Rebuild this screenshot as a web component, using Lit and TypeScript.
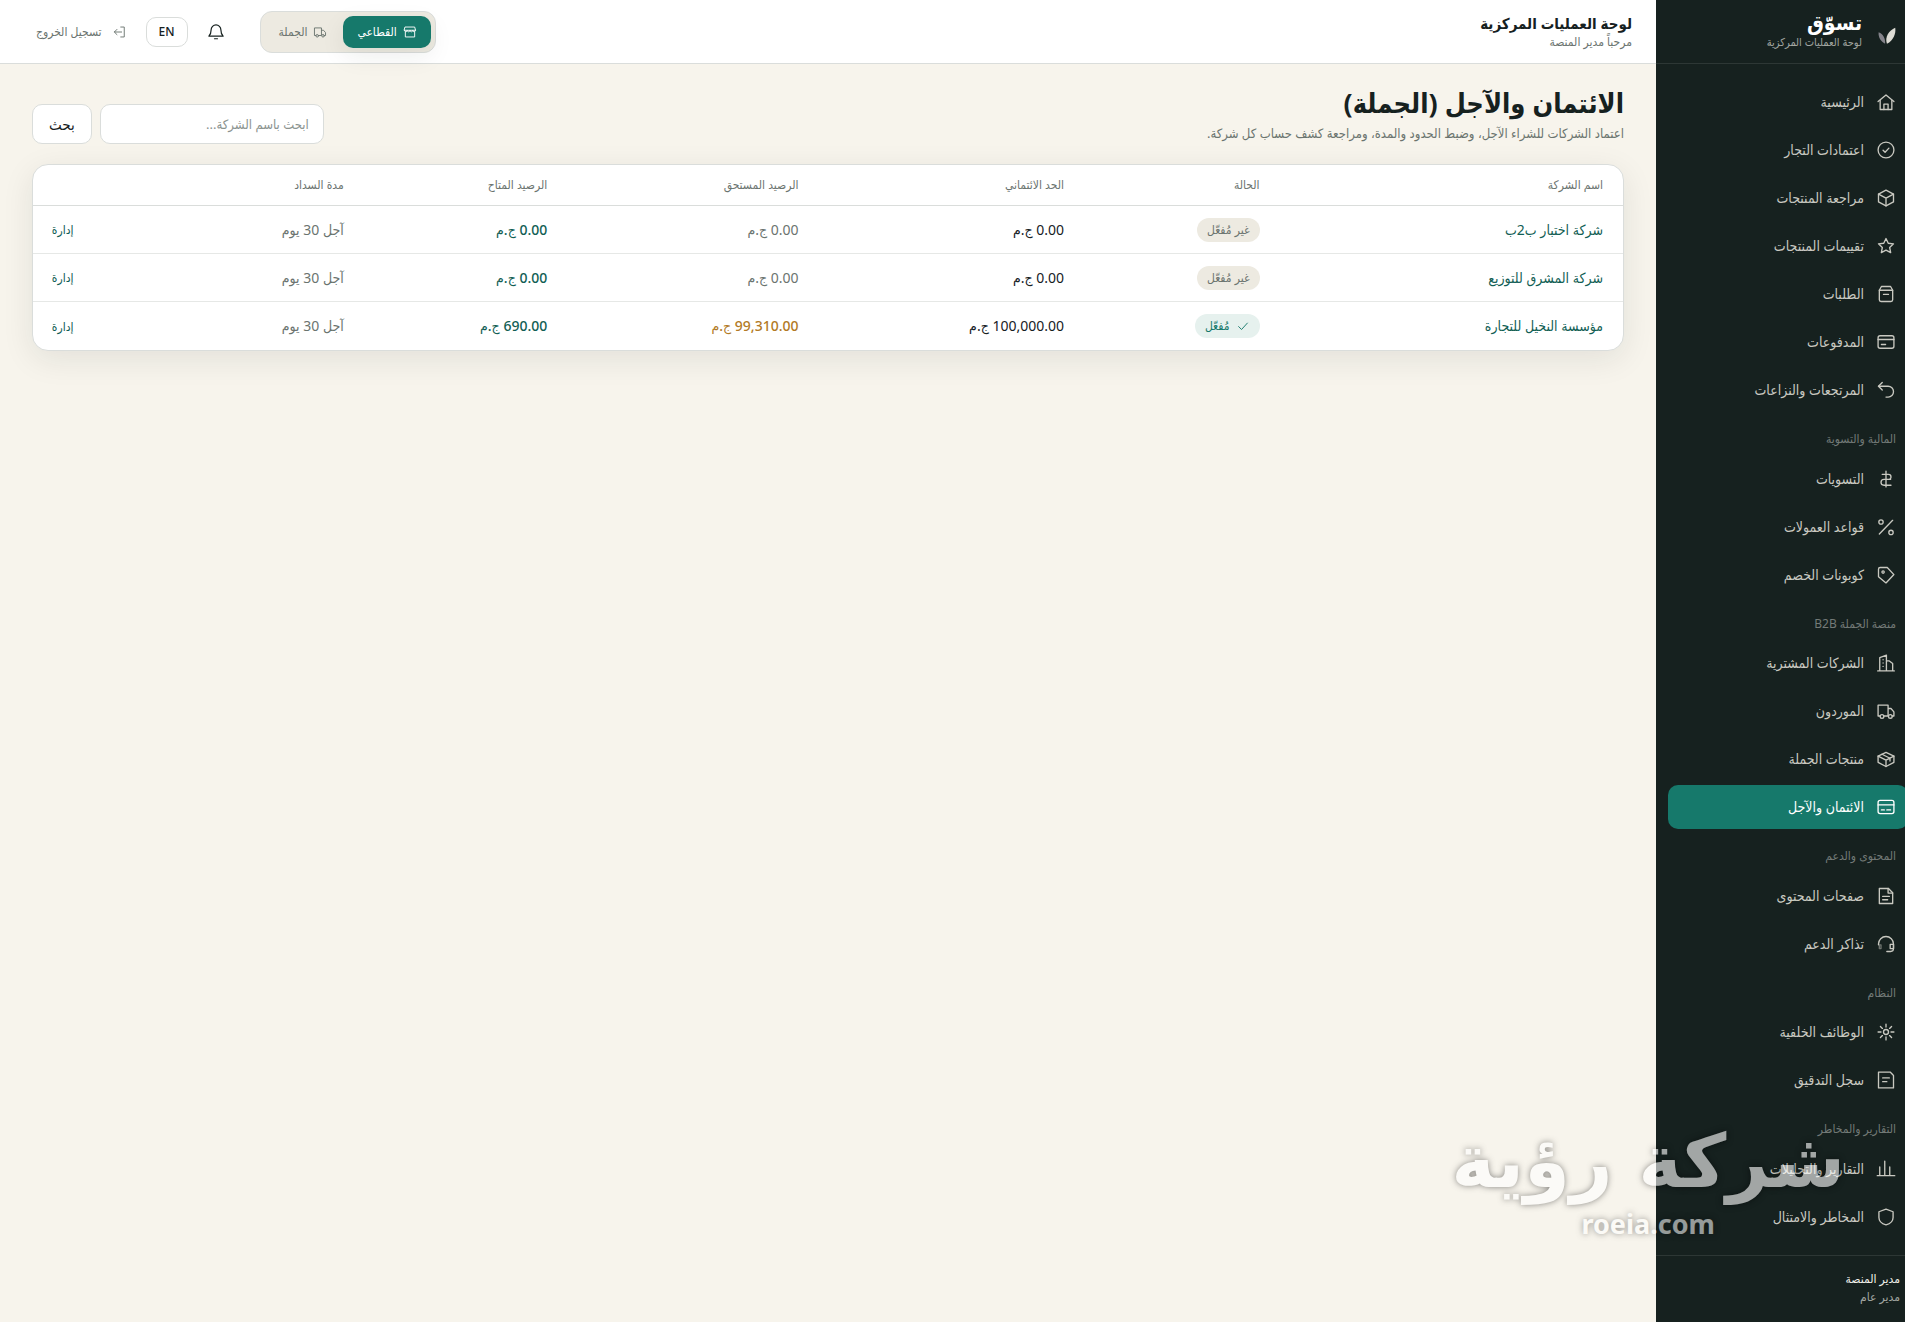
import { LitElement, html, css, svg, nothing } from 'lit';
import { customElement, property, state } from 'lit/decorators.js';
import { classMap } from 'lit/directives/class-map.js';

const ICONS: Record<string, unknown> = {
  home: svg`<path d="M2.500 11.500 12 3.500l9.500 8"/><path d="M5 10v11h14V10"/><path d="M9.500 21v-6.500h5V21"/>`,
  approve: svg`<circle cx="12" cy="12" r="9.500"/><path d="m8.500 12.300 2.400 2.400 4.600-4.900"/>`,
  box: svg`<path d="m12 2.500 9 4.800v9.400l-9 4.800-9-4.800V7.300z"/><path d="m3 7.300 9 4.900 9-4.900M12 12.200v9.300"/>`,
  star: svg`<path d="M12 3l2.700 5.700 6.300.700-4.600 4.400L17.600 20 12 17l-5.600 3 1.200-6.200L3 9.400l6.300-.700z"/>`,
  orders: svg`<path d="M6.500 3h11L20 7.500V19a2 2 0 0 1-2 2H6a2 2 0 0 1-2-2V7.500z"/><path d="M4 7.500h16M9 12.500h6"/>`,
  card: svg`<rect x="2.500" y="4.500" width="19" height="15" rx="2.500"/><path d="M2.500 9h19M6.500 15h5"/>`,
  back: svg`<path d="M7.500 3 3 7.500 7.500 12"/><path d="M3 7.500h11.500a6.500 6.500 0 0 1 0 13H12"/>`,
  money: svg`<path d="M12 2.500v19M7.500 6.500H15a3 3 0 0 1 0 6H9.500a3.500 3.500 0 0 0-3.500 3.500c0 2 1.500 3.500 3.500 3.500h8.500M15 12.500h2.500"/>`,
  percent: svg`<path d="M20 4 4 20.500"/><circle cx="6" cy="6" r="2.600"/><circle cx="18" cy="18.500" r="2.600"/>`,
  tag: svg`<path d="M5 3h8.500l8 8.500L12 21.500 3 14V5a2 2 0 0 1 2-2z"/><circle cx="8.500" cy="8.500" r="1.400"/>`,
  building: svg`<path d="M2 21.500h20M4.500 21.500V5.500L12.500 2.500v19M12.500 9.500h3.500l4 3v9"/><path d="M8.500 8v.100M8.500 12v.100M8.500 16v.100"/>`,
  truck: svg`<path d="M5 18H2.500V5h12v13H9.500M14.500 9h3.500l3.500 4v5h-2"/><circle cx="7.200" cy="18.500" r="2.200"/><circle cx="17.200" cy="18.500" r="2.200"/>`,
  package: svg`<path d="m12 4 9.500 4.500v7.500L12 21l-9.500-5V8.500z"/><path d="m2.500 8.500 9.500 4.800 9.500-4.800M12 13.300V21M7.200 6.300l9.600 4.800v3.400"/>`,
  credit: svg`<rect x="2.500" y="4" width="19" height="16" rx="2.500"/><path d="M2.500 9.500h19M6.500 15.500h3.500M13 15.500h4.500"/>`,
  page: svg`<path d="M4 3h11l5 5v13H4z"/><path d="M14.500 3v5.500H20M8 12.500h8M8 16.500h6"/>`,
  support: svg`<path d="M3 13v-1a9 9 0 0 1 18 0v5.500a3.500 3.500 0 0 1-3.500 3.500H13"/><path d="M17 12.500h4v5h-4z"/><path d="M4 13h2v4.500H4z" opacity="0.5"/>`,
  jobs: svg`<circle cx="12" cy="12" r="3"/><path d="M12 2.500V6M12 18v3.500M2.500 12H6M18 12h3.500M5.300 5.300l2.400 2.400M16.300 16.300l2.400 2.400M5.300 18.700l2.400-2.400M16.300 7.700l2.400-2.400"/>`,
  audit: svg`<path d="M3 2.500h14l4 4V21.500H3z"/><path d="M8 9.500h8M8 14h5"/>`,
  chart: svg`<path d="M1.500 20h21M4.500 20V9.500M10.500 20V2.500M16.500 20V9.500"/>`,
  shield: svg`<path d="m12 2.500 8.500 3.200v6.800c0 4.500-3.500 7.500-8.500 9-5-1.500-8.500-4.500-8.500-9V5.700z"/>`,
  store: svg`<path d="M4 3.500h16l1.500 5.500h-19z"/><path d="M4 11.500v9h16v-9M2.500 9c0 3.500 4.700 3.500 4.700 0 0 3.500 4.800 3.500 4.800 0 0 3.500 4.800 3.500 4.800 0 0 3.500 4.700 3.500 4.700 0"/>`,
  bell: svg`<path d="M12 2.500a6.500 6.500 0 0 0-6.500 6.500c0 5-1.500 7-3 8.500h19c-1.500-1.500-3-3.500-3-8.500A6.500 6.500 0 0 0 12 2.500z"/><path d="M10 21h4"/>`,
  logout: svg`<path d="M15 3.500h6v17h-6M16.500 12H4M8.500 7.500 4 12l4.500 4.500"/>`,
  check: svg`<path d="m4.500 13 5 5L19.500 7"/>`,
};

interface NavItem { icon: string; text: string; }
interface NavGroup { label?: string; items: NavItem[]; }

const NAV: NavGroup[] = [
  { items: [
    { icon: 'home', text: 'الرئيسية' },
    { icon: 'approve', text: 'اعتمادات التجار' },
    { icon: 'box', text: 'مراجعة المنتجات' },
    { icon: 'star', text: 'تقييمات المنتجات' },
    { icon: 'orders', text: 'الطلبات' },
    { icon: 'card', text: 'المدفوعات' },
    { icon: 'back', text: 'المرتجعات والنزاعات' },
  ] },
  { label: 'المالية والتسوية', items: [
    { icon: 'money', text: 'التسويات' },
    { icon: 'percent', text: 'قواعد العمولات' },
    { icon: 'tag', text: 'كوبونات الخصم' },
  ] },
  { label: 'منصة الجملة B2B', items: [
    { icon: 'building', text: 'الشركات المشترية' },
    { icon: 'truck', text: 'الموردون' },
    { icon: 'package', text: 'منتجات الجملة' },
    { icon: 'credit', text: 'الائتمان والآجل' },
  ] },
  { label: 'المحتوى والدعم', items: [
    { icon: 'page', text: 'صفحات المحتوى' },
    { icon: 'support', text: 'تذاكر الدعم' },
  ] },
  { label: 'النظام', items: [
    { icon: 'jobs', text: 'الوظائف الخلفية' },
    { icon: 'audit', text: 'سجل التدقيق' },
  ] },
  { label: 'التقارير والمخاطر', items: [
    { icon: 'chart', text: 'التقارير والتحليلات' },
    { icon: 'shield', text: 'المخاطر والامتثال' },
  ] },
];

interface Company { name: string; active: boolean; limit: string; due: string; available: string; terms: string; }

const COMPANIES: Company[] = [
  { name: 'شركة اختبار ب2ب', active: false, limit: '0.00', due: '0.00', available: '0.00', terms: 'آجل 30 يوم' },
  { name: 'شركة المشرق للتوزيع', active: false, limit: '0.00', due: '0.00', available: '0.00', terms: 'آجل 30 يوم' },
  { name: 'مؤسسة النخيل للتجارة', active: true, limit: '100,000.00', due: '99,310.00', available: '690.00', terms: 'آجل 30 يوم' },
];

@customElement('ui-icon')
class UiIcon extends LitElement {
  @property() name = '';
  static styles = css`
    :host { display: inline-flex; flex: none; width: 20px; height: 20px; }
    .glyph { width: 100%; height: 100%; fill: none; stroke: currentColor; stroke-width: 1.6; stroke-linecap: round; stroke-linejoin: round; }
  `;
  render() {
    return html`<svg class="glyph" viewBox="0 0 24 24" aria-hidden="true">${ICONS[this.name]}</svg>`;
  }
}

@customElement('side-nav')
class SideNav extends LitElement {
  @state() private current = 'credit';
  static styles = css`
    :host { display: block; background: #16211f; color: #c9c9c1; overflow: hidden; }
    * { box-sizing: border-box; }
    .inner { display: flex; flex-direction: column; min-height: 100vh; margin-right: -15px; }
    .brand { display: flex; align-items: center; gap: 12px; height: 64px; padding: 0 22px 4px; border-bottom: 1px solid #2d3735; }
    .mark { width: 24px; height: 24px; flex: none; margin-top: 12px; }
    .name { font-size: 21px; font-weight: 700; line-height: 24px; color: #fff; }
    .tag { font-size: 11px; line-height: 16px; color: #a2a6a1; }
    .menu { flex: 1; padding: 16px 12px; }
    .list { list-style: none; margin: 0; padding: 0; display: grid; gap: 4px; }
    .label { margin: 0; padding: 19px 12px 9px; font-size: 12px; font-weight: 400; line-height: 1.375; color: #737a77; }
    .item { display: flex; align-items: center; gap: 12px; height: 44px; padding: 0 12px; border-radius: 10px; color: inherit; font-size: 14px; line-height: 20px; text-decoration: none; }
    .item.on { background: #16796b; color: #fff; }
    .user { border-top: 1px solid #2d3735; padding: 14px 20px 16px; font-size: 12px; line-height: 18px; color: #a2a6a1; }
    .who { color: #f1f0ea; }
  `;
  render() {
    return html`<div class="inner">
      <div class="brand">
        <svg class="mark" viewBox="0 0 26 26" aria-hidden="true">
          <path d="M23 4c1 6-2 14-9 17.500C11.500 14 16 7 23 4z" fill="#dddcd5"/>
          <path d="M5 9c5 2 7.500 6.500 7 12.500C7.500 19 4.500 15 5 9z" fill="#84838a"/>
        </svg>
        <div><div class="name">تسوّق</div><div class="tag">لوحة العمليات المركزية</div></div>
      </div>
      <nav class="menu">
        ${NAV.map((g) => html`
          ${g.label ? html`<h2 class="label">${g.label}</h2>` : nothing}
          <ul class="list">${g.items.map((i) => html`<li>
            <a href="#${i.icon}" class=${classMap({ item: true, on: i.icon === this.current })} @click=${() => { this.current = i.icon; }}>
              <ui-icon name=${i.icon}></ui-icon><span>${i.text}</span></a></li>`)}</ul>`)}
      </nav>
      <div class="user"><div class="who">مدير المنصة</div><div>مدير عام</div></div>
    </div>`;
  }
}

@customElement('top-bar')
class TopBar extends LitElement {
  @state() private mode = 'retail';
  static styles = css`
    :host { display: flex; align-items: center; justify-content: space-between; height: 64px; padding: 0 24px; background: #fff; border-bottom: 1px solid #dadddb; box-sizing: border-box; color: #16211f; }
    * { box-sizing: border-box; }
    button { font: inherit; cursor: pointer; margin: 0; }
    .title { margin: 0; font-size: 15px; font-weight: 700; line-height: 20px; }
    .hello { margin: 0; font-size: 12px; line-height: 18px; color: #6b746f; }
    .tools { display: flex; align-items: center; }
    .switch { display: flex; gap: 2px; padding: 4px; border: 1px solid #dadddb; border-radius: 12px; background: #edeae1; margin-left: 24px; }
    .mode { display: flex; align-items: center; gap: 6px; height: 32px; padding: 0 14px; border: 0; border-radius: 10px; background: none; color: #6b746f; font-size: 12px; }
    .mode.on { background: #16796b; color: #fff; box-shadow: 0 8px 24px rgba(22, 33, 31, 0.08); }
    .mode ui-icon { width: 14px; height: 14px; }
    .round { display: grid; place-items: center; width: 40px; height: 40px; padding: 0; border: 0; background: none; color: #16211f; }
    .round ui-icon { width: 18px; height: 18px; }
    .lang { height: 30px; padding: 0 12px; margin: 0 8px; border: 1px solid #dadddb; border-radius: 10px; background: #fff; color: #16211f; font-size: 12px; font-weight: 500; }
    .exit { display: flex; align-items: center; gap: 10px; height: 32px; padding: 0 12px; border: 0; background: none; color: #6b746f; font-size: 12px; }
    .exit ui-icon { width: 14px; height: 14px; }
  `;
  private modeButton(id: string, icon: string, text: string) {
    return html`<button type="button" class=${classMap({ mode: true, on: this.mode === id })} aria-pressed=${this.mode === id} @click=${() => { this.mode = id; }}>
      <ui-icon name=${icon}></ui-icon>${text}</button>`;
  }
  render() {
    return html`
      <div><p class="title">لوحة العمليات المركزية</p><p class="hello">مرحباً مدير المنصة</p></div>
      <div class="tools">
        <div class="switch" role="group">${this.modeButton('retail', 'store', 'القطاعي')}${this.modeButton('wholesale', 'truck', 'الجملة')}</div>
        <button type="button" class="round" aria-label="الإشعارات"><ui-icon name="bell"></ui-icon></button>
        <button type="button" class="lang">EN</button>
        <button type="button" class="exit"><ui-icon name="logout"></ui-icon>تسجيل الخروج</button>
      </div>`;
  }
}

@customElement('credit-table')
class CreditTable extends LitElement {
  static styles = css`
    :host { display: block; background: #fff; border: 1px solid #dadddb; border-radius: 16px; overflow: hidden; box-shadow: 0 8px 32px rgba(22, 33, 31, 0.09); }
    table { width: 100%; border-collapse: collapse; table-layout: fixed; }
    th, td { padding: 0 20px; text-align: right; font-weight: 400; white-space: nowrap; line-height: 20px; }
    th { height: 40px; font-size: 12px; color: #6b746f; border-bottom: 1px solid #dadddb; }
    td { height: 47px; font-size: 14px; color: #16211f; border-bottom: 1px solid #e6e8e6; }
    tr:last-child td { height: 48px; border-bottom: 0; }
    .c-name { width: 21.6%; } .c-state { width: 12.3%; } .c-limit { width: 16.7%; }
    .c-due { width: 15.8%; } .c-free { width: 12.8%; } .c-terms { width: 17%; }
    .link { color: #115e54; text-decoration: none; font-size: 14px; }
    .link.small { font-size: 12px; }
    .soft, .term { color: #6b746f; }
    .warn { color: #b27a25; font-weight: 500; }
    .free { color: #115e54; font-weight: 500; }
    .pill { display: inline-flex; align-items: center; gap: 6px; height: 24px; padding: 0 10px; border-radius: 12px; background: #edeae1; color: #6b746f; font-size: 12px; vertical-align: middle; }
    .pill.on { background: #e6f1ee; color: #16796b; }
    .pill ui-icon { width: 14px; height: 14px; }
  `;
  render() {
    return html`<table>
      <colgroup><col class="c-name"><col class="c-state"><col class="c-limit"><col class="c-due"><col class="c-free"><col class="c-terms"><col></colgroup>
      <thead><tr><th>اسم الشركة</th><th>الحالة</th><th>الحد الائتماني</th><th>الرصيد المستحق</th><th>الرصيد المتاح</th><th>مدة السداد</th><th></th></tr></thead>
      <tbody>${COMPANIES.map((c) => html`<tr>
        <td><a class="link" href="#company">${c.name}</a></td>
        <td>${c.active
          ? html`<span class="pill on"><ui-icon name="check"></ui-icon>مُفعّل</span>`
          : html`<span class="pill">غير مُفعّل</span>`}</td>
        <td>${c.limit} ج.م</td>
        <td class=${c.active ? 'warn' : 'soft'}>${c.due} ج.م</td>
        <td class="free">${c.available} ج.م</td>
        <td class="term">${c.terms}</td>
        <td><a class="link small" href="#manage">إدارة</a></td>
      </tr>`)}</tbody>
    </table>`;
  }
}

@customElement('app-root')
class AppRoot extends LitElement {
  static styles = css`
    :host { display: block; position: relative; font-family: "Noto Sans", "DejaVu Sans Condensed", "DejaVu Sans", sans-serif; background: #f7f4ec; color: #16211f; direction: rtl; overflow: hidden; }
    * { box-sizing: border-box; }
    .shell { display: grid; grid-template-columns: 249px minmax(0, 1fr); min-height: 100vh; }
    .content { padding: 20px 32px 32px; }
    .head { display: flex; align-items: flex-end; justify-content: space-between; margin-bottom: 20px; }
    .title { margin: 0; font-size: 27px; font-weight: 700; line-height: 38px; }
    .lead { margin: 0; font-size: 13px; line-height: 22px; color: #6b746f; }
    .search { display: flex; gap: 8px; }
    .field { width: 224px; height: 40px; padding: 0 14px; border: 1px solid #dadddb; border-radius: 10px; background: #fff; font: inherit; font-size: 13px; color: #16211f; }
    .field::placeholder { color: #8b938f; opacity: 1; }
    .go { height: 40px; padding: 0 16px; border: 1px solid #dadddb; border-radius: 10px; background: #fff; font: inherit; font-size: 15px; color: #16211f; cursor: pointer; }
    .stamp { position: absolute; right: 60px; bottom: 81px; text-align: center; font-weight: 700; pointer-events: none; color: #fff; text-shadow: 0 0 6px rgba(0, 0, 0, 0.75); }
    .stamp-name { font-family: "DejaVu Sans", sans-serif; font-size: 74px; line-height: 92px; opacity: 0.6; }
    .stamp-site { font-size: 27px; line-height: 34px; opacity: 0.55; }
  `;
  render() {
    return html`<div class="shell">
      <side-nav></side-nav>
      <div>
        <top-bar></top-bar>
        <main class="content">
          <div class="head">
            <div><h1 class="title">الائتمان والآجل (الجملة)</h1>
              <p class="lead">اعتماد الشركات للشراء الآجل، وضبط الحدود والمدة، ومراجعة كشف حساب كل شركة.</p></div>
            <form class="search" @submit=${(e: Event) => e.preventDefault()}>
              <input class="field" type="search" aria-label="ابحث باسم الشركة" placeholder="ابحث باسم الشركة...">
              <button class="go" type="submit">بحث</button>
            </form>
          </div>
          <credit-table></credit-table>
        </main>
      </div>
    </div>
    <div class="stamp"><div class="stamp-name">شركة رؤية</div><div class="stamp-site">roeia.com</div></div>`;
  }
}
